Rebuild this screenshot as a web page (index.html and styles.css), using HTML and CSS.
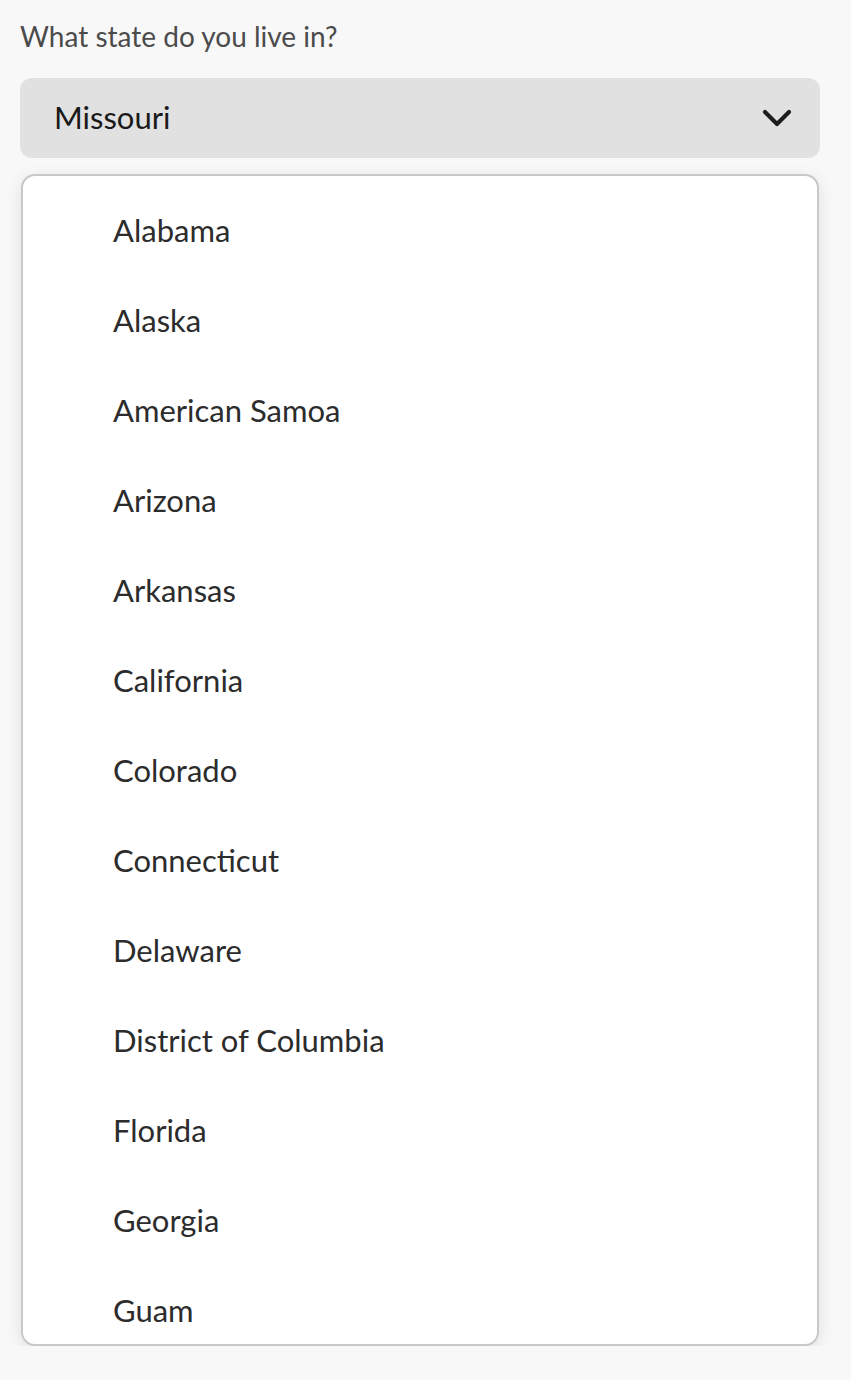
FILE: index.html
```html
<!DOCTYPE html>
<html lang="en">
<head>
<meta charset="utf-8">
<title>State picker</title>
<link rel="stylesheet" href="styles.css">
</head>
<body>
<div class="field">
  <label class="label">What state do you live in?</label>
  <button class="picker" type="button">
    <span class="value">Missouri</span>
    <svg class="chevron" width="30" height="20" viewBox="0 0 30 20" aria-hidden="true">
      <path d="M3 4 L15 16 L27 4" fill="none" stroke="#1d1d1d" stroke-width="4.2" stroke-linecap="round" stroke-linejoin="round"/>
    </svg>
  </button>
  <div class="popover">
    <ul class="menu">
      <li class="item">Alabama</li>
      <li class="item">Alaska</li>
      <li class="item">American Samoa</li>
      <li class="item">Arizona</li>
      <li class="item">Arkansas</li>
      <li class="item">California</li>
      <li class="item">Colorado</li>
      <li class="item">Connecticut</li>
      <li class="item">Delaware</li>
      <li class="item">District of Columbia</li>
      <li class="item">Florida</li>
      <li class="item">Georgia</li>
      <li class="item">Guam</li>
    </ul>
  </div>
</div>
</body>
</html>
```
FILE: styles.css
```css
html, body {
  margin: 0;
  padding: 0;
  background: #f8f8f8;
}
body {
  font-family: "Lato", "Open Sans", sans-serif;
  color: #222;
}
.field {
  padding: 16px 31px 0 20px;
  display: flex;
  flex-direction: column;
}
.label {
  display: block;
  font-size: 28px;
  line-height: 40px;
  color: #4b4b4b;
}
.picker {
  margin-top: 22px;
  height: 80px;
  border: none;
  border-radius: 12px;
  background: #e1e1e1;
  display: flex;
  align-items: center;
  justify-content: space-between;
  padding: 0 28px 3px 34px;
  font-family: inherit;
  cursor: pointer;
}
.value {
  font-size: 31px;
  color: #1a1a1a;
}
.chevron {
  display: block;
  margin-top: 3px;
}
.popover {
  margin: 16px 1px 0 1px;
  height: 1168px;
  background: #fff;
  border: 2px solid #c8c8c8;
  border-radius: 14px;
  box-shadow: 0 4px 16px rgba(0,0,0,0.10);
  overflow: hidden;
}
.menu {
  list-style: none;
  margin: 0;
  padding: 9px 0 0 0;
}
.item {
  height: 90px;
  display: flex;
  align-items: center;
  padding-left: 90px;
  font-size: 31px;
  color: #2c2c2c;
}
```
